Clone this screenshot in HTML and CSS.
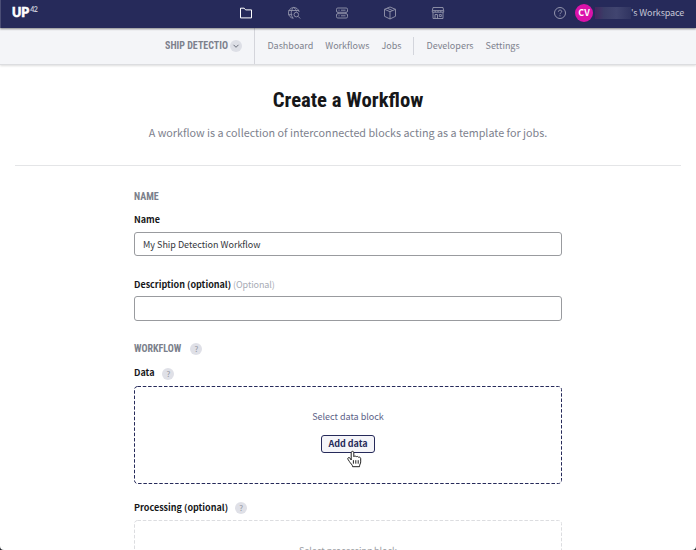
FILE: index.html
```html
<!DOCTYPE html>
<html lang="en">
<head>
<meta charset="utf-8">
<title>Create a Workflow</title>
<link rel="stylesheet" href="styles.css">
</head>
<body>
<header class="topbar">
  <div class="logo">UP<sup>42</sup></div>
  <nav class="icons">
    <svg class="active" viewBox="0 0 14 14"><path d="M1.5 2.2h3.7l1.4 1.7h5.9v8h-11z"/></svg>
    <svg viewBox="0 0 14 14"><path d="M12.2 6A5.4 5.4 0 1 0 6.5 12.3M1.5 4.5h10.5M1.3 8.7h4M6.8 1.3C3.5 4 3.5 9.500 6 12M6.800 1.300c1.600 1.300 2.300 2.700 2.600 4.200"/><circle cx="9.300" cy="8.600" r="2.300"/><path d="m11 10.300 2.200 2.200"/></svg>
    <svg viewBox="0 0 14 14"><rect x="1.500" y="2" width="11" height="4.300" rx="1.300"/><rect x="1.500" y="7.700" width="11" height="4.300" rx="1.300"/><path d="M3.500 4.200h1M6 4.200h4.500M3.500 9.800h1M6 9.800h4.500M3 6.300v1.400M11 6.300v1.400"/></svg>
    <svg viewBox="0 0 14 14"><path d="m7 1 5.500 2.300v7L7 13l-5.500-2.700v-7zM1.500 3.300 7 5.700l5.500-2.400M7 5.700V13M4.200 2.200l5.500 2.400"/></svg>
    <svg viewBox="0 0 14 14"><path d="M2 1.500h10l.7 3.300v1.400H1.300V4.800zM1.300 4.600h11.400M4.200 4.600v1.600M7 4.600v1.600M9.800 4.600v1.600M2 6.200v6.300h10V6.200M4 12.500V8.500h2.500v4M8.300 8.500h2v2h-2z"/></svg>
  </nav>
  <div class="account">
    <svg class="help" viewBox="0 0 14 14"><circle cx="7" cy="7" r="5.500"/><path d="M5.400 5.700c0-2.200 3.300-2.100 3.300-.2C8.700 6.800 7 6.800 7 8.200M7 9.300v1"/></svg>
    <span class="avatar">CV</span>
    <span class="redacted"></span>
    <span class="workspace">'s Workspace</span>
  </div>
</header>
<div class="subbar">
  <div class="project"><span class="project-name">SHIP DETECTIO</span><span class="chevron"><svg viewBox="0 0 12 12"><path d="m3.500 4.800 2.500 2.500 2.500-2.500"/></svg></span></div>
  <nav class="tabs"><a>Dashboard</a><a>Workflows</a><a>Jobs</a><i></i><a>Developers</a><a>Settings</a></nav>
</div>
<main>
  <section class="intro">
    <h1>Create a Workflow</h1>
    <p>A workflow is a collection of interconnected blocks acting as a template for jobs.</p>
  </section>
  <form class="form">
    <h2 class="name-heading">NAME</h2>
    <label class="name-label">Name</label>
    <div class="field">My Ship Detection Workflow</div>
    <label class="description-label">Description (optional) <small>(Optional)</small></label>
    <div class="field description"></div>
    <h2 class="workflow-heading">WORKFLOW<span class="tip">?</span></h2>
    <label class="data-label">Data<span class="tip">?</span></label>
    <div class="drop">
      <svg class="outline" width="428" height="98"><rect x=".5" y=".5" width="427" height="97" rx="3"/></svg>
      <span>Select data block</span>
      <div class="button">Add data
        <svg class="cursor" viewBox="0 0 16 18"><path d="M4.200 10V2.700c0-1.800 2.600-1.800 2.600 0v4c.5-1 2-1 2.400.1.700-.7 2-.4 2.300.5.900-.5 2.200 0 2.200 1.300v3.300c0 1.800-1.200 2.400-1.200 4.800H5.600c0-2-2.200-3.300-3.300-5.300L.9 9.200C.3 7.700 2 6.900 3 8.100z"/><path d="M6.400 10.200v3.500M8.800 10.200v3.500M11.200 10.200v3.500"/></svg>
      </div>
    </div>
    <label class="processing-label">Processing (optional)<span class="tip">?</span></label>
    <div class="drop muted">
      <svg class="outline" width="428" height="98"><rect x=".5" y=".5" width="427" height="97" rx="3"/></svg>
      <span>Select processing block</span>
    </div>
  </form>
</main>
</body>
</html>
```
FILE: styles.css
```css
* { box-sizing: border-box; }
html { height: 550px; overflow: hidden; background: #23252c; }
body { margin: 0; height: 550px; overflow: hidden; background: #fff; border-radius: 0 0 4px 4px; color: #161719; font-family: "Noto Sans CJK SC", sans-serif; font-size: 9px; line-height: 14px; }
svg { display: block; fill: none; stroke: currentColor; overflow: visible; }

.topbar { position: relative; z-index: 1; display: flex; height: 28px; background: #262a5a; color: #c5c6d5; border-left: 1px solid #4b4e76; box-shadow: 0 1px 2px #0007; }
.logo { width: 238px; padding-left: 11px; color: #fff; font: 900 12.500px/26px Lato, sans-serif; -webkit-text-stroke: .6px #fff; }
.logo sup { font-size: 7px; font-weight: 700; line-height: 0; position: relative; top: 0; margin-left: 1px; letter-spacing: -.5px; color: #c9cad9; -webkit-text-stroke: 0; }
.icons { display: flex; gap: 34px; padding-top: 6px; color: #9496ad; }
.icons svg { width: 14px; height: 14px; stroke-width: .9; }
.icons .active { color: #fff; stroke-width: 1; }
.account { display: flex; align-items: center; height: 26px; margin-left: auto; padding-right: 12px; }
.help { width: 14px; height: 14px; color: #9294ac; margin-right: 8px; }
.avatar { width: 18px; height: 18px; border-radius: 50%; background: #da13aa; color: #fff; font-weight: 700; font-size: 9px; line-height: 17px; text-align: center; }
.redacted { width: 36px; height: 12px; margin-left: 2px; background: linear-gradient(90deg, #44265f, #3a3d67 25%, #414570 60%, #303461); }
.workspace { width: 53px; white-space: nowrap; letter-spacing: -.1px; }

.subbar { display: flex; height: 37px; background: #f4f5f8; border-bottom: 1px solid #dcdde0; box-shadow: 0 1px 2px #0002; color: #7d818d; }
.project { display: flex; align-items: center; width: 255px; padding: 0 12px 1px 165px; border-right: 1px solid #d4d5db; }
.project-name { flex: none; width: 65px; white-space: nowrap; }
.project-name, h1, h2 { font-family: "Roboto Condensed", Roboto, sans-serif; font-stretch: 75%; }
.project-name { font-size: 10px; font-weight: 700; }
.chevron { flex: none; width: 12px; height: 12px; border-radius: 50%; background: #dddfe6; color: #686c79; }
.tabs { display: flex; align-items: center; gap: 12px; padding: 0 0 1px 12.400px; }
.tabs i { width: 1px; height: 18px; background: #d3d5dc; }

.intro { height: 101px; margin: 0 15px; padding-top: 22px; text-align: center; border-bottom: 1px solid #e4e5e7; }
h1 { margin: 0; font-size: 20.700px; line-height: 26px; font-weight: 700; }
.intro p { margin: 10px 0 0; font-size: 10.750px; line-height: 20px; color: #7d818d; }

.form { display: flex; flex-direction: column; width: 428px; margin: 0 auto; }
h2 { display: flex; align-items: center; height: 14px; margin: 0; font-size: 10px; font-weight: 700; color: #7b7f8b; }
label { display: flex; align-items: center; height: 14px; font-weight: 700; }
label small { font-size: 9px; font-weight: 400; color: #a7abb5; margin-left: 2px; letter-spacing: -.1px; }
.name-heading { margin-top: 24px; }
.name-label { margin-top: 9px; }
.field { height: 24px; margin-top: 5px; padding: 0 8px; border: 1px solid #999b9f; border-radius: 3px; line-height: 23px; color: #34363b; }
.description-label { margin-top: 22px; }
.field.description { height: 25px; margin-top: 4px; }
.workflow-heading { margin-top: 21px; }
.data-label { margin-top: 10px; }
.tip { width: 12px; height: 12px; margin-left: 8px; border-radius: 50%; background: #dfe0e7; color: #9295a0; font: 400 8px/12px "Noto Sans CJK SC", sans-serif; text-align: center; }
.data-label .tip { margin-top: 2px; }
.workflow-heading .tip { margin-left: 9px; }
.processing-label .tip { margin-left: 7px; }
.drop { position: relative; display: flex; flex-direction: column; align-items: center; height: 98px; margin-top: 6px; padding-top: 24px; color: #5c5f87; }
.outline { position: absolute; inset: 0; color: #262a5a; stroke-width: 1; stroke-dasharray: 3.500 1.800; }
.button { position: relative; width: 54px; height: 18px; margin-top: 11px; border: 1px solid #262a5a; border-radius: 3px; background: #f5f5f9; color: #262a5a; font-weight: 700; line-height: 15px; text-align: center; }
.cursor { position: absolute; left: 25px; top: 14px; width: 16px; height: 18px; color: #222; fill: #fff; stroke-width: 1; }
.processing-label { margin-top: 17px; }
.drop.muted { margin-top: 5px; height: 32px; overflow: hidden; color: #9b9da2; }
.muted .outline { color: #dcdde0; stroke-width: 1; }
```
